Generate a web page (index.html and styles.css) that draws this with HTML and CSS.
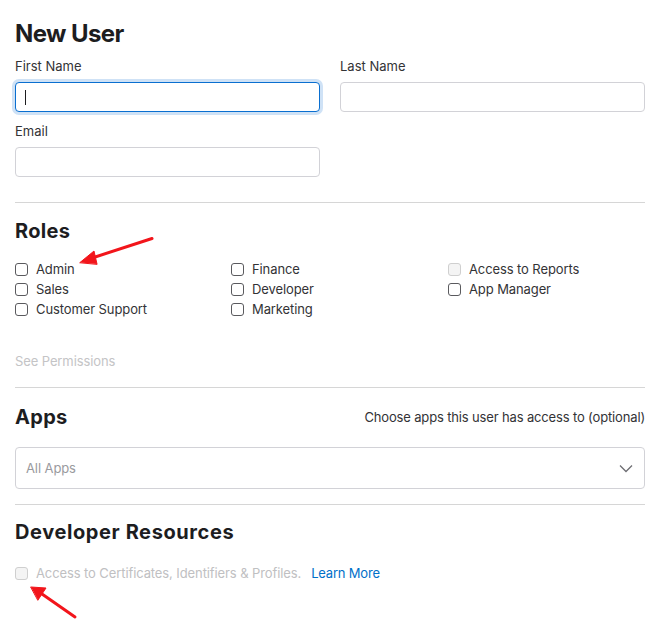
FILE: index.html
```html
<!DOCTYPE html>
<html>
<head>
<meta charset="utf-8">
<link rel="stylesheet" href="styles.css">
</head>
<body>
<div class="page">
  <h1 class="title">New User</h1>
  <div class="name-grid">
    <div class="field">
      <label class="label">First Name</label>
      <div class="input focused"><span class="caret"></span></div>
    </div>
    <div class="field">
      <label class="label">Last Name</label>
      <div class="input"></div>
    </div>
    <div class="field">
      <label class="label">Email</label>
      <div class="input"></div>
    </div>
  </div>

  <hr class="sep sep-roles">

  <h2 class="section">Roles</h2>
  <div class="roles">
    <label class="check"><span class="box"></span>Admin</label>
    <label class="check"><span class="box"></span>Finance</label>
    <label class="check"><span class="box disabled"></span>Access to Reports</label>
    <label class="check"><span class="box"></span>Sales</label>
    <label class="check"><span class="box"></span>Developer</label>
    <label class="check"><span class="box"></span>App Manager</label>
    <label class="check"><span class="box"></span>Customer Support</label>
    <label class="check"><span class="box"></span>Marketing</label>
  </div>
  <div class="see-perm">See Permissions</div>

  <hr class="sep sep-apps">

  <div class="apps-head">
    <h2 class="section">Apps</h2>
    <span class="hint">Choose apps this user has access to (optional)</span>
  </div>
  <div class="select">
    <span class="placeholder">All Apps</span>
    <svg class="chev" width="14" height="9" viewBox="0 0 14 9"><path d="M1 1.5 L7 7.5 L13 1.5" fill="none" stroke="#6e6e73" stroke-width="1.3"/></svg>
  </div>

  <hr class="sep sep-dev">

  <h2 class="section">Developer Resources</h2>
  <div class="dev-row">
    <label class="check muted"><span class="box disabled"></span>Access to Certificates, Identifiers &amp; Profiles.</label>
    <a class="learn">Learn More</a>
  </div>

  <svg class="arrows" width="672" height="641" viewBox="0 0 672 641">
    <g stroke="#f2151b" stroke-width="3" stroke-linecap="round" fill="#f2151b">
      <line x1="152" y1="238.5" x2="92" y2="258"/>
      <polygon points="80,262.5 94,251 97,264" stroke-width="1" stroke-linejoin="round"/>
      <line x1="75" y1="617" x2="42" y2="594"/>
      <polygon points="31,587 46,588 38,600" stroke-width="1" stroke-linejoin="round"/>
    </g>
  </svg>
</div>
</body>
</html>
```

FILE: styles.css
```css
* { box-sizing: border-box; }
html, body { margin: 0; padding: 0; background: #fff; }
body {
  font-family: Inter, "Helvetica Neue", "Liberation Sans", sans-serif;
  color: #333336;
  width: 672px;
  height: 641px;
  overflow: hidden;
}
.page {
  position: relative;
  padding: 19px 27px 0 15px;
}
.title {
  margin: 0;
  font-size: 24px;
  line-height: 30px;
  font-weight: 700;
  color: #1d1d1f;
  letter-spacing: -0.6px;
}
.name-grid {
  display: grid;
  grid-template-columns: 305px 305px;
  column-gap: 20px;
  row-gap: 10px;
  margin-top: 8px;
}
.field { display: flex; flex-direction: column; }
.label {
  font-size: 13px;
  line-height: 18px;
  color: #333336;
  margin-bottom: 7px;
}
.input {
  height: 30px;
  border: 1px solid #d2d2d7;
  border-radius: 4px;
  background: #fff;
  position: relative;
}
.input.focused {
  border-color: #0a6fd0;
  box-shadow: 0 0 0 3px #cfe2f6;
}
.caret {
  position: absolute;
  left: 9px;
  top: 7px;
  width: 1px;
  height: 15px;
  background: #1d1d1f;
}
.sep {
  border: 0;
  border-top: 1px solid #d6d6d6;
  margin: 0;
  width: 630px;
}
.sep-roles { margin-top: 25px; }
.section {
  margin: 0;
  font-size: 20px;
  line-height: 24px;
  font-weight: 700;
  color: #1d1d1f;
  letter-spacing: 0.3px;
}
.sep-roles + .section { margin-top: 16px; }
.roles {
  display: grid;
  grid-template-columns: 216px 217px 1fr;
  row-gap: 4px;
  margin-top: 18px;
}
.check {
  display: flex;
  align-items: center;
  font-size: 13px;
  line-height: 16px;
  color: #333336;
  white-space: nowrap;
  letter-spacing: -0.1px;
}
.box {
  width: 13px;
  height: 13px;
  border: 1px solid #5a5a5e;
  border-radius: 3px;
  margin-right: 8px;
  flex: none;
  background: #fff;
}
.box.disabled {
  border-color: #cfcfcf;
  background: #f4f4f4;
}
.see-perm {
  margin-top: 36px;
  font-size: 13px;
  line-height: 16px;
  color: #c4c4c6;
  letter-spacing: -0.1px;
}
.sep-apps { margin-top: 18px; }
.apps-head {
  display: flex;
  justify-content: space-between;
  align-items: center;
  margin-top: 17px;
}
.hint {
  font-size: 13px;
  color: #333336;
  letter-spacing: -0.15px;
}
.select {
  margin-top: 18px;
  height: 42px;
  border: 1px solid #d2d2d7;
  border-radius: 4px;
  display: flex;
  align-items: center;
  justify-content: space-between;
  padding: 0 10px 0 10px;
}
.placeholder { font-size: 13px; color: #9a9a9e; letter-spacing: -0.1px; }
.chev { display: block; margin-right: 1px; }
.sep-dev { margin-top: 15px; }
.sep-dev + .section { margin-top: 15px; letter-spacing: 0.6px; }
.dev-row {
  display: flex;
  align-items: center;
  margin-top: 21px;
}
.check.muted { color: #c0c0c2; }
.learn {
  margin-left: 10px;
  font-size: 13px;
  color: #0070c9;
  letter-spacing: -0.2px;
}
.arrows {
  position: absolute;
  left: 0;
  top: 0;
  pointer-events: none;
}
```
